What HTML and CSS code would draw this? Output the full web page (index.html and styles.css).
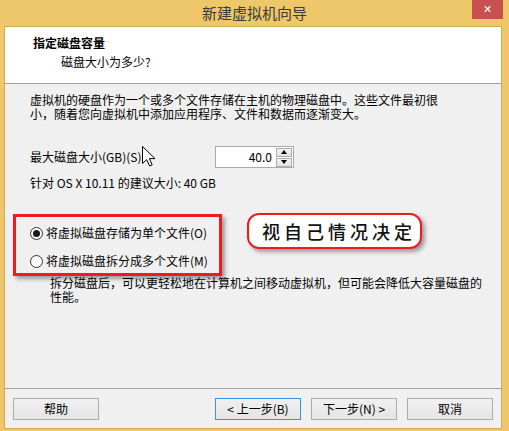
FILE: index.html
```html
<!DOCTYPE html>
<html lang="zh-CN">
<head>
<meta charset="utf-8">
<title>新建虚拟机向导</title>
<link rel="stylesheet" href="styles.css">
</head>
<body>
<div class="window">
  <div class="titlebar">
    <span class="title">新建虚拟机向导</span>
    <span class="close">✕</span>
  </div>
  <div class="frame">
    <div class="header">
      <div class="h-title">指定磁盘容量</div>
      <div class="h-sub">磁盘大小为多少?</div>
    </div>
    <div class="body">
      <p class="para">虚拟机的硬盘作为一个或多个文件存储在主机的物理磁盘中。这些文件最初很<br>小，随着您向虚拟机中添加应用程序、文件和数据而逐渐变大。</p>
      <div class="size-row">
        <span class="label">最大磁盘大小(GB)(S):</span>
        <div class="spin">
          <span class="spin-value">40.0</span>
          <div class="spin-btns">
            <span class="spin-btn"><span class="tri up"></span></span>
            <span class="spin-btn"><span class="tri down"></span></span>
          </div>
        </div>
      </div>
      <p class="rec">针对 OS X 10.11 的建议大小: 40 GB</p>
      <div class="choice-row">
        <div class="redbox">
          <label class="radio-row"><span class="radio checked"></span>将虚拟磁盘存储为单个文件(O)</label>
          <label class="radio-row"><span class="radio"></span>将虚拟磁盘拆分成多个文件(M)</label>
        </div>
        <div class="callout">视自己情况决定</div>
      </div>
      <p class="desc">拆分磁盘后，可以更轻松地在计算机之间移动虚拟机，但可能会降低大容量磁盘的<br>性能。</p>
      <svg class="cursor" width="14" height="21" viewBox="0 0 14 21">
        <path d="M0.5 0.5 L0.5 17.5 L4.7 13.6 L7.6 20 L10.2 18.9 L7.4 12.6 L13 12.6 Z" fill="#fff" stroke="#000" stroke-width="1" stroke-linejoin="miter"/>
      </svg>
    </div>
    <div class="footer">
      <button class="btn">帮助</button>
      <span class="spacer"></span>
      <button class="btn default">&lt; 上一步(B)</button>
      <button class="btn">下一步(N) &gt;</button>
      <button class="btn">取消</button>
    </div>
  </div>
</div>
</body>
</html>
```

FILE: styles.css
```css
* { box-sizing: border-box; }
html, body {
  margin: 0;
  padding: 0;
}
body {
  width: 509px;
  height: 431px;
  overflow: hidden;
  background: #efc76b;
  font-family: "Noto Sans CJK SC", "Microsoft YaHei", sans-serif;
  font-size: 12px;
  color: #000;
}
.window {
  width: 509px;
  height: 431px;
  display: flex;
  flex-direction: column;
}
.titlebar {
  position: relative;
  height: 26px;
  display: flex;
  align-items: center;
  justify-content: center;
}
.title {
  font-size: 15px;
  line-height: 20px;
  color: #3a3a3a;
}
.close {
  position: absolute;
  top: 0;
  right: 6px;
  width: 31px;
  height: 19px;
  background: #c75050;
  color: #fff;
  font-family: "DejaVu Sans", sans-serif;
  font-size: 11px;
  font-weight: bold;
  line-height: 19px;
  text-align: center;
}
.frame {
  margin: 0 7px 2px 4px;
  flex: 1;
  border: 1px solid #d3aa52;
  background: #f0f0f0;
  display: flex;
  flex-direction: column;
}
.header {
  background: #fff;
  height: 57px;
  border-bottom: 1px solid #a0a0a0;
  padding: 9px 0 0 28px;
}
.h-title {
  font-weight: bold;
  line-height: 14px;
}
.h-sub {
  line-height: 14px;
  margin: 5px 0 0 28px;
}
.body {
  position: relative;
  flex: 1;
  padding: 9px 0 0 25px;
}
.para {
  margin: 0;
  line-height: 14px;
}
.size-row {
  display: flex;
  align-items: center;
  margin-top: 25px;
  height: 22px;
}
.label {
  width: 185px;
  line-height: 14px;
}
.spin {
  width: 79px;
  height: 22px;
  border: 1px solid #ababab;
  background: #fff;
  display: flex;
  align-items: center;
}
.spin-value {
  flex: 1;
  text-align: right;
  padding-right: 4px;
  line-height: 14px;
}
.spin-btns {
  display: flex;
  flex-direction: column;
  gap: 1px;
  margin-right: 1px;
}
.spin-btn {
  width: 16px;
  height: 9px;
  border: 1px solid #acacac;
  background: linear-gradient(#f2f2f2, #e3e3e3);
  display: flex;
  align-items: center;
  justify-content: center;
}
.tri {
  width: 0;
  height: 0;
  border-left: 3.5px solid transparent;
  border-right: 3.5px solid transparent;
}
.tri.up { border-bottom: 4px solid #000; }
.tri.down { border-top: 4px solid #000; }
.rec {
  margin: 8px 0 0;
  line-height: 14px;
}
.choice-row {
  display: flex;
  align-items: flex-start;
  margin: 24px 0 0 -17px;
  gap: 25px;
}
.redbox {
  width: 209px;
  height: 62px;
  border: 3px solid #ee1c1c;
  box-shadow: 3px 3px 4px rgba(0, 0, 0, 0.35);
  padding: 9px 0 0 14px;
  display: flex;
  flex-direction: column;
  gap: 14px;
}
.radio-row {
  display: flex;
  align-items: center;
  height: 14px;
  line-height: 14px;
}
.radio {
  width: 13px;
  height: 13px;
  border: 1px solid #333;
  border-radius: 50%;
  background: #fff;
  margin-right: 3px;
  display: flex;
  align-items: center;
  justify-content: center;
}
.radio.checked::after {
  content: "";
  width: 7px;
  height: 7px;
  border-radius: 50%;
  background: #1a1a1a;
}
.callout {
  margin-top: -1px;
  width: 175px;
  height: 36px;
  border: 2px solid #ee1c1c;
  border-radius: 12px;
  background: #fff;
  box-shadow: 3px 3px 4px rgba(0, 0, 0, 0.35);
  font-size: 18px;
  font-weight: 500;
  letter-spacing: 4px;
  line-height: 32px;
  padding-left: 13px;
  color: #111;
}
.desc {
  margin: 0 0 0 20px;
  line-height: 14px;
}
.cursor {
  position: absolute;
  left: 137px;
  top: 62px;
}
.footer {
  height: 40px;
  border-top: 1px solid #a0a0a0;
  padding: 9px 8px 0 8px;
  display: flex;
  align-items: flex-start;
  gap: 10px;
}
.spacer { flex: 1; }
.btn {
  width: 86px;
  height: 22px;
  border: 1px solid #acacac;
  background: linear-gradient(#f0f0f0, #e5e5e5);
  font-family: inherit;
  font-size: 12px;
  line-height: 14px;
  color: #000;
  padding: 0;
}
.btn.default {
  border-color: #3c8fe6;
}
```
